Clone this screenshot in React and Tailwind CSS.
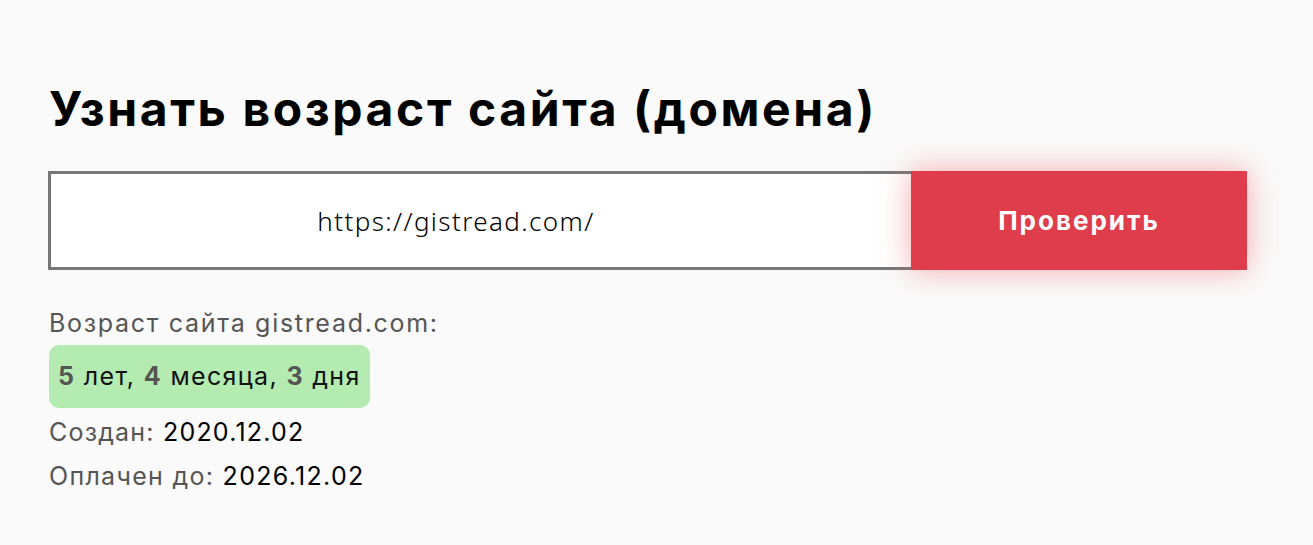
import React, { useState } from 'react'

function App() {
  const [url, setUrl] = useState('https://gistread.com/');

  return (
    <div className="min-h-[545px] bg-[#fafafa] px-[48px] pt-[80px] font-['Inter',sans-serif]">
      <h1 className="ml-[1px] text-[48px] font-bold leading-[58px] text-black tracking-[2.6px]">
        Узнать возраст сайта (домена)
      </h1>

      {/* Form */}
      <div className="mt-[33px] flex w-[1199px] h-[99px]">
        <input
          value={url}
          onChange={(e) => setUrl(e.target.value)}
          className="w-[863px] shrink-0 h-full border-[3px] border-r-0 border-[#777] bg-white text-center pr-[50px] text-[26px] tracking-[1.4px] font-['Noto_Sans',sans-serif] font-light text-black outline-none"
        />
        <button className="relative z-10 w-[336px] h-full bg-[#df3c4c] text-white text-[26px] font-bold tracking-[2px] shadow-[0_0_28px_rgba(240,90,100,0.5)]">
          Проверить
        </button>
      </div>

      {/* Result */}
      <div className="ml-[1px] mt-[37px] text-[25px] leading-[32px] tracking-[1.7px] text-[#555]">
        Возраст сайта gistread.com:
      </div>
      <div className="ml-[1px] mt-[6px] inline-flex items-center h-[63px] px-[9px] rounded-[10px] bg-[#b3ebb1] text-[25px] tracking-[1.35px] text-[#111]">
        <b className="text-[#555] font-bold">5</b>&nbsp;лет,&nbsp;<b className="text-[#555] font-bold">4</b>&nbsp;месяца,&nbsp;<b className="text-[#555] font-bold">3</b>&nbsp;дня
      </div>
      <div className="ml-[1px] mt-[6px] text-[25px] leading-[36px] tracking-[1.2px] text-[#555]">
        Создан: <span className="text-black">2020.12.02</span>
      </div>
      <div className="ml-[1px] mt-[8px] text-[25px] leading-[36px] tracking-[1.3px] text-[#555]">
        Оплачен до: <span className="text-black">2026.12.02</span>
      </div>
    </div>
  )
}

export default App
